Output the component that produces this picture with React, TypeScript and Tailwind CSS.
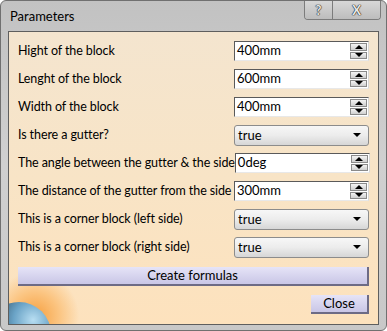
import React from "react"

const font = { fontFamily: 'Lato, "Noto Sans", sans-serif' }

function Spin({ value }: { value: string }) {
  return (
    <div className="flex h-[20px] w-[135px] shrink-0 border border-t-[#5a5a5a] border-l-[#5a5a5a] border-r-[#d8d8d8] border-b-[#e8e8e8] bg-white">
      <div className="flex-1 pl-[2px] text-[13px] leading-[17px] text-black">{value}</div>
      <div className="flex w-[18px] flex-col gap-px bg-white py-px pr-px">
        <div className="flex flex-1 items-center justify-center border border-[#8a8a8a] bg-gradient-to-b from-[#f4f4f4] to-[#cfcfcf]">
          <div className="h-0 w-0 border-x-[4px] border-b-[4px] border-x-transparent border-b-black" />
        </div>
        <div className="flex flex-1 items-center justify-center border border-[#8a8a8a] bg-gradient-to-b from-[#f4f4f4] to-[#cfcfcf]">
          <div className="h-0 w-0 border-x-[4px] border-t-[4px] border-x-transparent border-t-black" />
        </div>
      </div>
    </div>
  )
}

function Select({ value }: { value: string }) {
  return (
    <div className="flex h-[21px] w-[135px] shrink-0 items-center justify-between rounded-[3px] border border-[#8c8c8c] bg-gradient-to-b from-[#f7f7f7] via-[#ececec] to-[#d6d6d6] pl-[3px] pr-[7px]">
      <span className="text-[13px] leading-[17px] text-black">{value}</span>
      <div className="h-0 w-0 border-x-[4px] border-t-[4px] border-x-transparent border-t-black" />
    </div>
  )
}

const rows: { label: string; kind: "spin" | "select"; value: string }[] = [
  { label: "Hight of the block", kind: "spin", value: "400mm" },
  { label: "Lenght of the block", kind: "spin", value: "600mm" },
  { label: "Width of the block", kind: "spin", value: "400mm" },
  { label: "Is there a gutter?", kind: "select", value: "true" },
  { label: "The angle between the gutter & the side", kind: "spin", value: "0deg" },
  { label: "The distance of the gutter from the side", kind: "spin", value: "300mm" },
  { label: "This is a corner block (left side)", kind: "select", value: "true" },
  { label: "This is a corner block (right side)", kind: "select", value: "true" },
]

export default function App() {
  return (
    <div
      style={font}
      className="flex h-[331px] w-[387px] flex-col overflow-hidden rounded-[6px] border border-[#707070] bg-gradient-to-b from-[#c2c2c2] via-[#d0d0d0] to-[#c8c8c8]"
    >
      <div className="flex h-[30px] shrink-0 items-start justify-between pl-[9px] pr-[5px]">
        <span className="mt-[7px] text-[13px] leading-[16px] text-black">Parameters</span>
        <div className="flex h-[19px] overflow-hidden rounded-b-[4px] border border-t-0 border-[#7c7c7c]">
          <div className="flex w-[28px] items-center justify-center border-r border-[#7c7c7c] bg-gradient-to-b from-[#d8d8d8] to-[#bdbdbd] text-[13px] font-bold leading-none text-[#e8e8e8] [text-shadow:0_0_1px_#222,0_0_1px_#222,0_0_1px_#222]">
            ?
          </div>
          <div className="flex w-[47px] items-center justify-center bg-gradient-to-b from-[#d8d8d8] to-[#bdbdbd] text-[13px] font-bold leading-none text-[#e8e8e8] [text-shadow:0_0_1px_#222,0_0_1px_#222,0_0_1px_#222]">
            X
          </div>
        </div>
      </div>
      <div className="relative mx-[7px] mb-[5px] flex flex-1 flex-col overflow-hidden border border-[#5e5e5e] bg-gradient-to-b from-[#f4e5cf] via-[#f8e4c6] to-[#fde2bd] px-[9px] pt-[9px]">
        <div className="absolute -bottom-[40px] -left-[22px] h-[96px] w-[96px] rounded-full bg-[radial-gradient(circle,#f6a040_0%,#fbc480_35%,transparent_65%)]" />
        <div className="absolute -bottom-[42px] -left-[22px] h-[64px] w-[64px] rounded-full bg-[radial-gradient(circle_at_72%_28%,#b8def2_0%,#6aa3c6_30%,#35566e_60%,#1e2a33_85%)]" />
        <div className="relative flex flex-col gap-[8px]">
          {rows.map((r) => (
            <div key={r.label} className="flex h-[20px] items-center justify-between">
              <span className="whitespace-nowrap text-[12.5px] leading-[16px] tracking-[-0.1px] text-black">{r.label}</span>
              {r.kind === "spin" ? <Spin value={r.value} /> : <Select value={r.value} />}
            </div>
          ))}
        </div>
        <div className="relative mt-[10px] flex h-[19px] items-center justify-center border-b-[2px] border-r-[2px] border-b-[#6d6b85] border-r-[#6d6b85] bg-gradient-to-b from-[#e6e4f7] to-[#c9c6e6] text-[13px] leading-none text-black">
          Create formulas
        </div>
        <div className="relative mt-[9px] flex justify-end">
          <div className="flex h-[19px] w-[58px] items-center justify-center border-b-[2px] border-r-[2px] border-b-[#6d6b85] border-r-[#6d6b85] bg-gradient-to-b from-[#e6e4f7] to-[#c9c6e6] text-[13px] leading-none text-black">
            Close
          </div>
        </div>
      </div>
    </div>
  )
}
